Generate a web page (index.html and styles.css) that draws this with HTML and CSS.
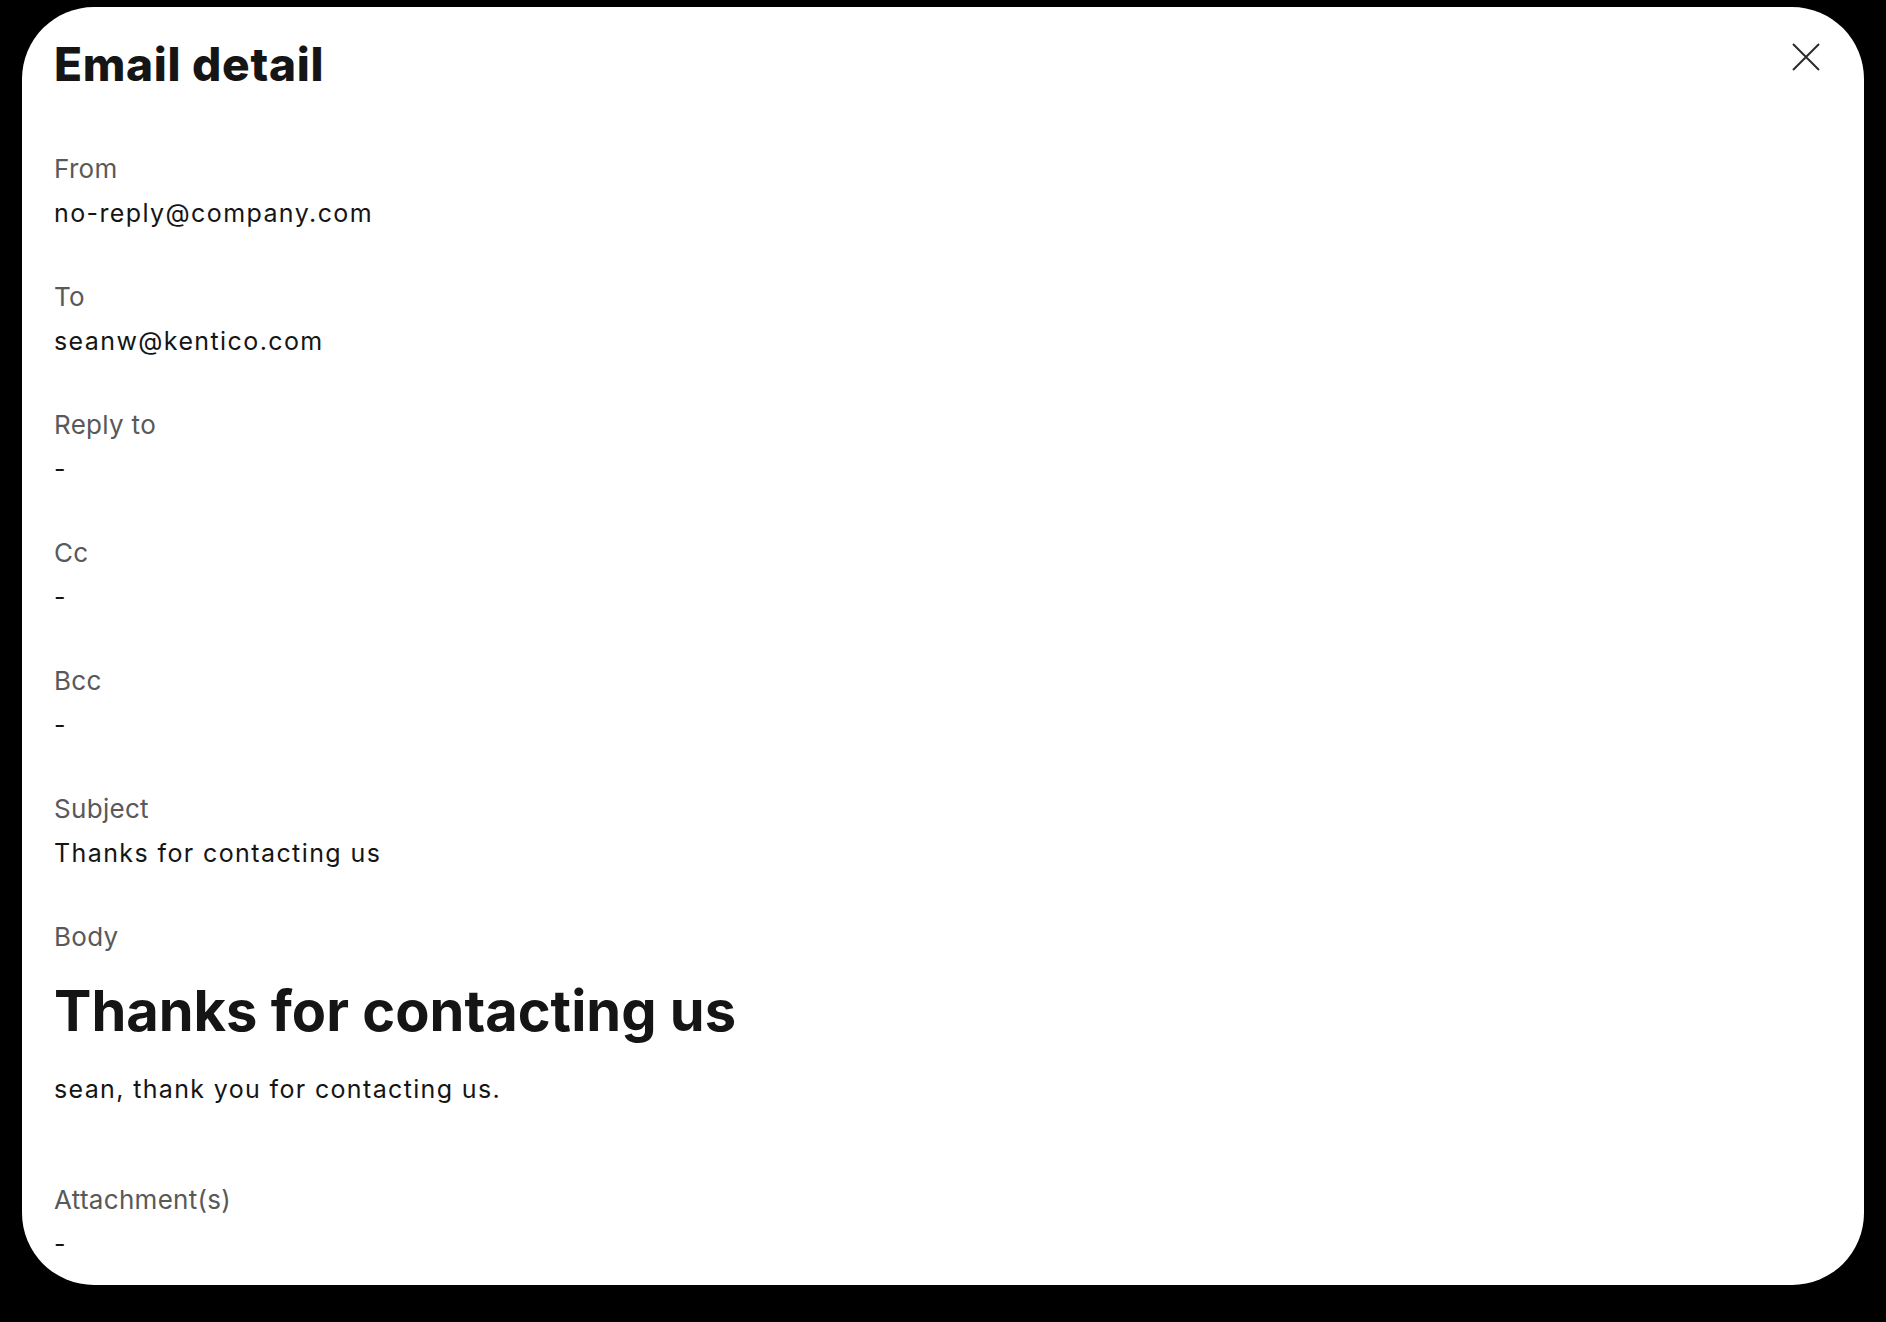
FILE: index.html
```html
<!DOCTYPE html>
<html lang="en">
<head>
<meta charset="utf-8">
<title>Email detail</title>
<link rel="stylesheet" href="styles.css">
</head>
<body>
<div class="dialog">
  <header class="dialog-header">
    <h1 class="dialog-title">Email detail</h1>
    <button class="close-btn" aria-label="Close">
      <svg width="28" height="28" viewBox="0 0 28 28"><path d="M1 1 L27 27 M27 1 L1 27" stroke="#2b2b2b" stroke-width="2" fill="none"/></svg>
    </button>
  </header>
  <div class="fields">
    <div class="field"><div class="label">From</div><div class="value">no-reply@company.com</div></div>
    <div class="field"><div class="label">To</div><div class="value">seanw@kentico.com</div></div>
    <div class="field"><div class="label">Reply to</div><div class="value">-</div></div>
    <div class="field"><div class="label">Cc</div><div class="value">-</div></div>
    <div class="field"><div class="label">Bcc</div><div class="value">-</div></div>
    <div class="field"><div class="label">Subject</div><div class="value">Thanks for contacting us</div></div>
    <div class="field field-body">
      <div class="label">Body</div>
      <div class="email-body">
        <h2 class="email-heading">Thanks for contacting us</h2>
        <p class="email-text">sean, thank you for contacting us.</p>
      </div>
    </div>
    <div class="field"><div class="label">Attachment(s)</div><div class="value">-</div></div>
  </div>
</div>
</body>
</html>
```
FILE: styles.css
```css
html, body {
  margin: 0;
  padding: 0;
  background: #000;
}
body {
  font-family: Inter, "Noto Sans", sans-serif;
  color: #151515;
  height: 1322px;
  padding-top: 7px;
  box-sizing: border-box;
}
.dialog {
  margin: 0 22px;
  height: 1278px;
  background: #fff;
  border-radius: 72px;
  box-sizing: border-box;
  padding: 29px 44px 0 32px;
  overflow: hidden;
}
.dialog-header {
  display: flex;
  justify-content: space-between;
  align-items: flex-start;
}
.dialog-title {
  margin: 0;
  font-size: 46px;
  line-height: 56px;
  font-weight: 800;
  letter-spacing: 0.7px;
  color: #151515;
}
.close-btn {
  border: 0;
  background: none;
  padding: 0;
  margin-top: 7px;
  width: 28px;
  height: 28px;
  display: flex;
}
.fields {
  margin-top: 61px;
  display: flex;
  flex-direction: column;
  gap: 52px;
}
.field {
  display: flex;
  flex-direction: column;
  gap: 12px;
}
.label {
  font-size: 26px;
  line-height: 32px;
  letter-spacing: 0.3px;
  color: #595959;
}
.value {
  font-size: 25px;
  line-height: 32px;
  letter-spacing: 1.4px;
  color: #151515;
}
.field-body {
  gap: 24px;
}
.email-heading {
  margin: 0;
  font-size: 56px;
  line-height: 68px;
  font-weight: 700;
  letter-spacing: 0;
  color: #151515;
}
.email-text {
  margin: 28px 0 27px;
  font-size: 25px;
  line-height: 32px;
  letter-spacing: 1.35px;
}
```
